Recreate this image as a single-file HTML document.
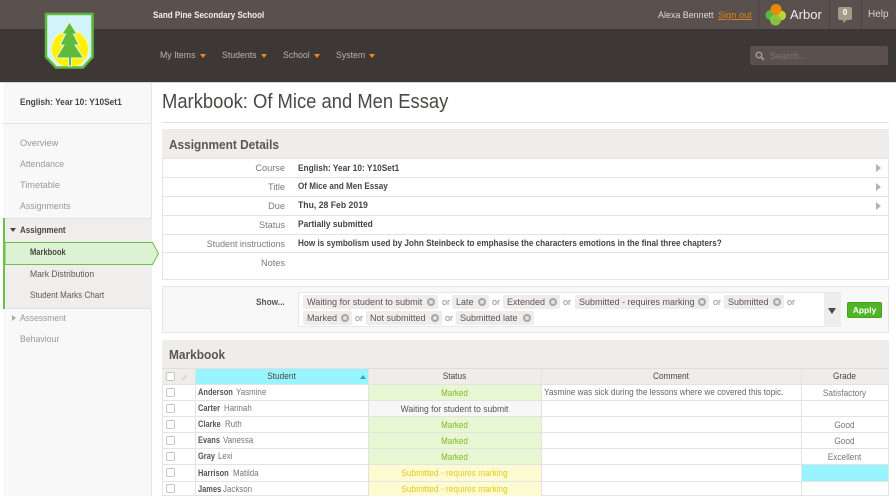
<!DOCTYPE html>
<html><head><meta charset="utf-8">
<style>
html,body{margin:0;padding:0;width:896px;height:496px;overflow:hidden;background:#fff;font-family:"Liberation Sans",sans-serif;font-size:9px;color:#555}
.a{position:absolute}
.t{position:absolute;white-space:nowrap;line-height:12px;transform:scaleX(var(--s,1));transform-origin:0 50%}
.b{font-weight:bold}
.r{text-align:right;transform-origin:100% 50%}
.c{text-align:center;transform-origin:50% 50%}
.tag{position:absolute;height:14px;background:#eeedeb;border-radius:2px;line-height:14px;padding-left:4px;box-sizing:border-box;color:#5a5552;white-space:nowrap;font-size:9px;border:0}
.x{position:absolute;right:3px;top:3px;width:8px;height:8px;border-radius:50%;background:#a9a7a5}
.x:after{content:"";position:absolute;left:2px;top:2px;width:4px;height:4px;background:#e4e3e1;border-radius:50%}
.or{position:absolute;color:#888;line-height:12px}
.cb{position:absolute;left:166px;width:7px;height:7px;border:1px solid #c6c5c3;border-radius:2px;background:#fff}
.cell{position:absolute;box-sizing:border-box;height:16px;line-height:16px;text-align:center;white-space:nowrap;transform:scaleX(var(--s,.92));transform-origin:50% 50%}
.line{position:absolute;background:#e4e3e1;height:1px}
.v{position:absolute;background:#e4e3e1;width:1px}
.s{color:#9a9896;font-size:9.200px}
.nav{color:#b9b4b0;font-size:9.500px;--s:.92}
.car{position:absolute;width:0;height:0;border-left:3px solid transparent;border-right:3px solid transparent;border-top:4px solid #f08a12}
.ln{font-weight:bold;color:#555;--s:.83;left:198px}
.fn{color:#777;--s:.88}
.lab{left:185px;width:100px;color:#7d7977;font-size:9.200px}
.val{left:298px;color:#444;font-size:8.800px;font-weight:bold}
</style></head><body>

<!-- Header -->
<div class="a" style="left:0;top:0;width:896px;height:29px;background:#5a514e"></div>
<div class="a" style="left:0;top:29px;width:896px;height:53px;background:#3d3835"></div>
<div class="a" style="left:0;top:82px;width:896px;height:1px;background:#d8d6d4"></div>

<svg class="a" style="left:44px;top:12px" width="52" height="59" viewBox="0 0 52 59">
<defs><clipPath id="sh"><path d="M3 3H47.500V44.500L38.500 54H12.500L3 44.500Z"/></clipPath></defs>
<path d="M2 2H48.500V45L39 55.500H12L2 45Z" fill="#d4f4fb" stroke="#5cb93c" stroke-width="2.500"/>
<g clip-path="url(#sh)"><circle cx="26" cy="37" r="18.500" fill="#fff200" stroke="#f5f7b0" stroke-width="1"/></g>
<path d="M25.500 10L33 22H29.500L35 33H31L39.500 46H27.500V54H24.500V46H12L20 33H16L21.500 22H18Z" fill="#5dba3d" stroke="#eaf7dc" stroke-width="1"/>
</svg>

<div class="t b" style="left:153px;top:9px;color:#f1efed;font-size:9.200px;--s:.875">Sand Pine Secondary School</div>

<div class="t nav" style="left:160px;top:50px">My Items</div><div class="car" style="left:200px;top:54px"></div>
<div class="t nav" style="left:222px;top:50px">Students</div><div class="car" style="left:261px;top:54px"></div>
<div class="t nav" style="left:283px;top:50px">School</div><div class="car" style="left:314px;top:54px"></div>
<div class="t nav" style="left:336px;top:50px">System</div><div class="car" style="left:369px;top:54px"></div>

<div class="t" style="left:658px;top:9px;color:#dedbd8;font-size:9.200px;--s:.97">Alexa Bennett</div>
<div class="t" style="left:718px;top:9px;color:#d9821f;font-size:9.200px;text-decoration:underline">Sign out</div>
<div class="a" style="left:758px;top:0;width:1px;height:29px;background:#4b4441"></div>
<div class="a" style="left:829px;top:0;width:1px;height:29px;background:#4b4441"></div>
<div class="a" style="left:861px;top:0;width:1px;height:29px;background:#4b4441"></div>
<svg class="a" style="left:764px;top:3px" width="24" height="24" viewBox="0 0 24 24">
<circle cx="6.500" cy="12" r="5" fill="#54b947"/>
<circle cx="17" cy="12.500" r="5" fill="#bcd631"/>
<circle cx="11.500" cy="17" r="5.500" fill="#8dc63f" opacity=".95"/>
<circle cx="12" cy="6.500" r="5.500" fill="#f28c00" opacity=".95"/>
</svg>
<div class="t" style="left:790px;top:7px;color:#eeeceb;font-size:13px;line-height:16px">Arbor</div>
<div class="a" style="left:838px;top:7px;width:14px;height:13px;border-radius:2px;background:#a49a8a"></div>
<div class="a" style="left:843px;top:20px;width:0;height:0;border-left:4px solid #a49a8a;border-bottom:3px solid transparent"></div>
<div class="t b c" style="left:838px;top:7px;width:14px;color:#fff;font-size:8px">0</div>
<div class="t" style="left:868px;top:9px;color:#d6d3d0;font-size:10px">Help</div>

<div class="a" style="left:750px;top:46px;width:138px;height:19px;background:#5a514e;border-radius:2px"></div>
<svg class="a" style="left:755px;top:51px" width="10" height="10" viewBox="0 0 10 10"><circle cx="4" cy="4" r="2.800" fill="none" stroke="#a09a95" stroke-width="1.500"/><path d="M6 6L9 9" stroke="#a09a95" stroke-width="1.800"/></svg>
<div class="t" style="left:770px;top:50px;color:#7d7672;font-size:9.200px">Search...</div>

<!-- Sidebar -->
<div class="a" style="left:3px;top:83px;width:148px;height:413px;background:#f8f8f8;border-right:1px solid #e6e5e3;box-sizing:content-box"></div>
<div class="t b" style="left:20px;top:96px;color:#4a4644;font-size:9px;--s:.927">English: Year 10: Y10Set1</div>
<div class="line" style="left:3px;top:123px;width:148px"></div>
<div class="t s" style="left:20px;top:137px">Overview</div>
<div class="t s" style="left:20px;top:158px;--s:.95">Attendance</div>
<div class="t s" style="left:20px;top:179px">Timetable</div>
<div class="t s" style="left:20px;top:200px;--s:.96">Assignments</div>

<div class="a" style="left:3px;top:218px;width:149px;height:91px;background:#efeeec;border-top:1px solid #e2e1df;border-bottom:1px solid #e2e1df;box-sizing:border-box"></div>
<div class="a" style="left:3px;top:218px;width:2px;height:91px;background:#68c24a"></div>
<div class="a" style="left:10px;top:228px;width:0;height:0;border-left:3.500px solid transparent;border-right:3.500px solid transparent;border-top:4px solid #444"></div>
<div class="t b" style="left:20px;top:224px;color:#4a4644;font-size:9px;--s:.885">Assignment</div>
<svg class="a" style="left:5px;top:242px" width="155" height="23" viewBox="0 0 155 23"><path d="M0 .5H147.500L153.500 11.500L147.500 22.500H0Z" fill="#dcf2d3" stroke="#68c24a" stroke-width="1"/></svg>
<div class="t b" style="left:30px;top:246px;color:#4a4644;font-size:8.800px;--s:.86">Markbook</div>
<div class="t" style="left:30px;top:268px;color:#5c5856;font-size:9.200px;--s:.93">Mark Distribution</div>
<div class="t" style="left:30px;top:289px;color:#5c5856;font-size:9.200px;--s:.88">Student Marks Chart</div>
<div class="a" style="left:12px;top:315px;width:0;height:0;border-top:3.500px solid transparent;border-bottom:3.500px solid transparent;border-left:4px solid #aaa"></div>
<div class="t s" style="left:20px;top:312px;--s:.92">Assessment</div>
<div class="t s" style="left:20px;top:333px;--s:.95">Behaviour</div>

<!-- Title -->
<div class="t" style="left:162px;top:90px;color:#4c4846;font-size:20px;line-height:24px;--s:.92">Markbook: Of Mice and Men Essay</div>
<div class="line" style="left:162px;top:122px;width:727px"></div>

<!-- Assignment details -->
<div class="a" style="left:162px;top:129px;width:727px;height:151px;border:1px solid #e6e5e3;box-sizing:border-box"></div>
<div class="a" style="left:162px;top:129px;width:727px;height:29px;background:#eeedeb"></div>
<div class="t b" style="left:169px;top:138px;color:#5a5654;font-size:12.500px;line-height:15px;--s:.948">Assignment Details</div>
<div class="line" style="left:162px;top:158px;width:727px"></div>
<div class="line" style="left:162px;top:177px;width:727px"></div>
<div class="line" style="left:162px;top:196px;width:727px"></div>
<div class="line" style="left:162px;top:215px;width:727px"></div>
<div class="line" style="left:162px;top:234px;width:727px"></div>
<div class="line" style="left:162px;top:252px;width:727px"></div>

<div class="t r lab" style="top:162px">Course</div>
<div class="t r lab" style="top:181px">Title</div>
<div class="t r lab" style="top:200px">Due</div>
<div class="t r lab" style="top:219px">Status</div>
<div class="t r lab" style="top:238px;--s:.97">Student instructions</div>
<div class="t r lab" style="top:257px">Notes</div>

<div class="t val" style="top:162px;--s:.944">English: Year 10: Y10Set1</div>
<div class="t val" style="top:180px;--s:.918">Of Mice and Men Essay</div>
<div class="t val" style="top:199px;--s:.985">Thu, 28 Feb 2019</div>
<div class="t val" style="top:218px;--s:.95">Partially submitted</div>
<div class="t val" style="top:237px;--s:.926">How is symbolism used by John Steinbeck to emphasise the characters emotions in the final three chapters?</div>

<div class="a" style="left:876px;top:164px;width:0;height:0;border-top:4px solid transparent;border-bottom:4px solid transparent;border-left:5px solid #b5b3b1"></div>
<div class="a" style="left:876px;top:183px;width:0;height:0;border-top:4px solid transparent;border-bottom:4px solid transparent;border-left:5px solid #b5b3b1"></div>
<div class="a" style="left:876px;top:202px;width:0;height:0;border-top:4px solid transparent;border-bottom:4px solid transparent;border-left:5px solid #b5b3b1"></div>

<!-- Show filter -->
<div class="a" style="left:162px;top:286px;width:727px;height:47px;background:#f8f8f8;border:1px solid #e6e5e3;box-sizing:border-box"></div>
<div class="t b" style="left:256px;top:296px;color:#5a5654;font-size:9px;--s:.92">Show...</div>
<div class="a" style="left:298px;top:292px;width:543px;height:35px;background:#fff;border:1px solid #e8e7e5;box-sizing:border-box;border-radius:2px"></div>
<div class="a" style="left:824px;top:293px;width:17px;height:34px;background:#eeedeb"></div>
<div class="a" style="left:828px;top:308px;width:0;height:0;border-left:4px solid transparent;border-right:4px solid transparent;border-top:6px solid #4a4644"></div>

<div class="tag" style="left:303px;top:295px;width:135px;font-size:9.150px">Waiting for student to submit<i class="x"></i></div>
<div class="or" style="left:442px;top:296px">or</div>
<div class="tag" style="left:452px;top:295px;width:37px">Late<i class="x"></i></div>
<div class="or" style="left:492px;top:296px">or</div>
<div class="tag" style="left:503px;top:295px;width:57px">Extended<i class="x"></i></div>
<div class="or" style="left:563px;top:296px">or</div>
<div class="tag" style="left:575px;top:295px;width:134px">Submitted - requires marking<i class="x"></i></div>
<div class="or" style="left:713px;top:296px">or</div>
<div class="tag" style="left:724px;top:295px;width:60px">Submitted<i class="x"></i></div>
<div class="or" style="left:787px;top:296px">or</div>
<div class="tag" style="left:303px;top:311px;width:49px">Marked<i class="x"></i></div>
<div class="or" style="left:355px;top:312px">or</div>
<div class="tag" style="left:366px;top:311px;width:76px">Not submitted<i class="x"></i></div>
<div class="or" style="left:445px;top:312px">or</div>
<div class="tag" style="left:456px;top:311px;width:78px">Submitted late<i class="x"></i></div>

<div class="a b" style="left:847px;top:302px;width:35px;height:16px;background:#4fb524;border:1px solid #46a21f;box-sizing:border-box;border-radius:2px;color:#fff;text-align:center;line-height:14px;font-size:8.500px">Apply</div>

<!-- Markbook -->
<div class="a" style="left:162px;top:340px;width:727px;height:156px;border:1px solid #e6e5e3;box-sizing:border-box"></div>
<div class="a" style="left:162px;top:340px;width:727px;height:44px;background:#eeedeb"></div>
<div class="t b" style="left:169px;top:348px;color:#5a5654;font-size:12.500px;line-height:15px;--s:.95">Markbook</div>
<div class="line" style="left:162px;top:368px;width:727px;background:#dfdedc"></div>
<div class="a" style="left:195px;top:369px;width:173px;height:15px;background:#98f5ff"></div>
<div class="a" style="left:360px;top:375px;width:0;height:0;border-left:3px solid transparent;border-right:3px solid transparent;border-bottom:4px solid #2aa6bd"></div>
<div class="cell" style="left:195px;top:369px;width:173px;color:#4a4644;line-height:15px">Student</div>
<div class="cell" style="left:368px;top:369px;width:173px;color:#4a4644;line-height:15px">Status</div>
<div class="cell" style="left:541px;top:369px;width:260px;color:#4a4644;line-height:15px">Comment</div>
<div class="cell" style="left:801px;top:369px;width:87px;color:#4a4644;line-height:15px">Grade</div>
<div class="cb" style="top:372px"></div>
<svg class="a" style="left:180px;top:373px" width="10" height="9" viewBox="0 0 10 9"><path d="M1.500 7.500L2 5.500L6 1.500L7.500 3L3.500 7Z" fill="#d8d7d5"/></svg>

<!-- status fills -->
<div class="a" style="left:368px;top:385px;width:173px;height:15px;background:#e8f7d3"></div>
<div class="a" style="left:368px;top:401px;width:173px;height:15px;background:#f7f7f7"></div>
<div class="a" style="left:368px;top:417px;width:173px;height:47px;background:#e8f7d3"></div>
<div class="a" style="left:368px;top:465px;width:173px;height:31px;background:#fdfbd2"></div>
<div class="a" style="left:802px;top:465px;width:86px;height:16px;background:#98f5ff"></div>

<!-- grid -->
<div class="line" style="left:163px;top:384px;width:725px"></div>
<div class="line" style="left:163px;top:400px;width:725px"></div>
<div class="line" style="left:163px;top:416px;width:725px"></div>
<div class="line" style="left:163px;top:432px;width:725px"></div>
<div class="line" style="left:163px;top:448px;width:725px"></div>
<div class="line" style="left:163px;top:464px;width:725px"></div>
<div class="line" style="left:163px;top:481px;width:725px"></div>
<div class="v" style="left:195px;top:369px;height:127px"></div>
<div class="v" style="left:368px;top:369px;height:127px"></div>
<div class="v" style="left:541px;top:369px;height:127px"></div>
<div class="v" style="left:801px;top:369px;height:127px"></div>

<!-- rows -->
<div class="cb" style="top:388px"></div>
<div class="cb" style="top:404px"></div>
<div class="cb" style="top:420px"></div>
<div class="cb" style="top:436px"></div>
<div class="cb" style="top:452px"></div>
<div class="cb" style="top:468px"></div>
<div class="cb" style="top:484px"></div>

<div class="t ln" style="top:386px">Anderson</div><div class="t fn" style="left:236px;top:386px">Yasmine</div>
<div class="t ln" style="top:402px">Carter</div><div class="t fn" style="left:224px;top:402px">Hannah</div>
<div class="t ln" style="top:418px">Clarke</div><div class="t fn" style="left:224.500px;top:418px">Ruth</div>
<div class="t ln" style="top:434px">Evans</div><div class="t fn" style="left:222.500px;top:434px">Vanessa</div>
<div class="t ln" style="top:450px">Gray</div><div class="t fn" style="left:218px;top:450px">Lexi</div>
<div class="t ln" style="top:467px">Harrison</div><div class="t fn" style="left:232.500px;top:467px">Matilda</div>
<div class="t ln" style="top:483px">James</div><div class="t fn" style="left:223px;top:483px">Jackson</div>

<div class="cell" style="left:368px;top:385px;width:173px;color:#7fb52a;--s:.89">Marked</div>
<div class="cell" style="left:368px;top:401px;width:173px;color:#555;--s:.947">Waiting for student to submit</div>
<div class="cell" style="left:368px;top:417px;width:173px;color:#7fb52a;--s:.89">Marked</div>
<div class="cell" style="left:368px;top:433px;width:173px;color:#7fb52a;--s:.89">Marked</div>
<div class="cell" style="left:368px;top:449px;width:173px;color:#7fb52a;--s:.89">Marked</div>
<div class="cell" style="left:368px;top:465px;width:173px;color:#e8c81e">Submitted - requires marking</div>
<div class="cell" style="left:368px;top:481px;width:173px;color:#e8c81e">Submitted - requires marking</div>

<div class="t" style="left:544px;top:386px;color:#666;--s:.912">Yasmine was sick during the lessons where we covered this topic.</div>

<div class="cell" style="left:801px;top:385px;width:87px;color:#777">Satisfactory</div>
<div class="cell" style="left:801px;top:417px;width:87px;color:#777">Good</div>
<div class="cell" style="left:801px;top:433px;width:87px;color:#777">Good</div>
<div class="cell" style="left:801px;top:449px;width:87px;color:#777">Excellent</div>

</body></html>
